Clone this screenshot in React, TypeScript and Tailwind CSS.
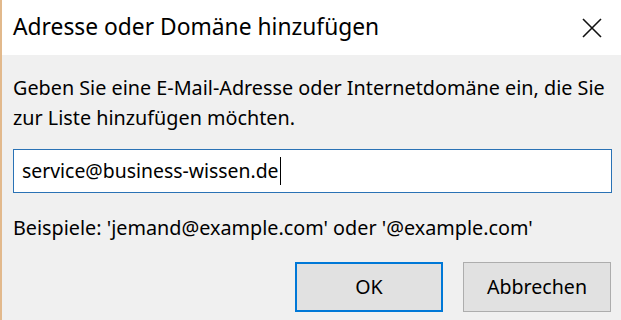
export default function App() {
  return (
    <div
      className="w-[621px] h-[320px] flex flex-col bg-[#f0f0f0] border-l-2 border-[#e2b98c] text-black overflow-hidden"
      style={{ fontFamily: '"Noto Sans", "Open Sans", sans-serif' }}
    >
      <div className="h-[55px] shrink-0 bg-white flex items-center justify-between pl-[11px] pr-[19px]">
        <span className="text-[22.8px] leading-none">Adresse oder Domäne hinzufügen</span>
        <svg width="20" height="20" viewBox="0 0 20 20" className="text-[#111]">
          <path d="M1 1 L19 19 M19 1 L1 19" stroke="currentColor" strokeWidth="1.6" fill="none" />
        </svg>
      </div>

      <div className="flex flex-col pl-[11px] pr-[9px] pt-[18px]">
        <p className="text-[19.8px] leading-[30px]">
          Geben Sie eine E-Mail-Adresse oder Internetdomäne ein, die Sie zur Liste hinzufügen möchten.
        </p>

        <div className="mt-[16px] h-[44px] bg-white border border-[#2a72b5] flex items-center pl-[8px]">
          <span className="text-[19.4px]">service@business-wissen.de</span>
          <span className="w-px h-[28px] bg-black ml-px" />
        </div>

        <p className="mt-[20px] text-[19.8px] leading-[30px]">
          Beispiele: 'jemand@example.com' oder '@example.com'
        </p>

        <div className="mt-[19px] flex justify-end gap-[20px] pr-px">
          <button className="w-[148px] h-[50px] bg-[#e1e1e1] border-2 border-[#0078d7] text-[19.6px]">
            OK
          </button>
          <button className="w-[148px] h-[50px] bg-[#e1e1e1] border border-[#adadad] text-[19.6px]">
            Abbrechen
          </button>
        </div>
      </div>
    </div>
  )
}
